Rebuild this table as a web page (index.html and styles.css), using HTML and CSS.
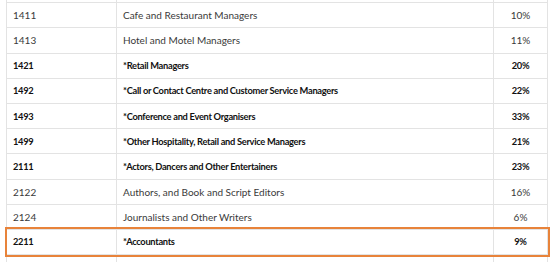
FILE: index.html
```html
<!DOCTYPE html>
<html>
<head>
<meta charset="utf-8">
<link rel="stylesheet" href="styles.css">
</head>
<body>
<table class="occ">
  <colgroup><col class="c-code"><col class="c-name"><col class="c-pct"></colgroup>
  <tbody>
    <tr class="cut"><td></td><td></td><td></td></tr>
    <tr><td>1411</td><td>Cafe and Restaurant Managers</td><td class="pct">10%</td></tr>
    <tr><td>1413</td><td>Hotel and Motel Managers</td><td class="pct">11%</td></tr>
    <tr class="b"><td>1421</td><td>*Retail Managers</td><td class="pct">20%</td></tr>
    <tr class="b"><td>1492</td><td>*Call or Contact Centre and Customer Service Managers</td><td class="pct">22%</td></tr>
    <tr class="b"><td>1493</td><td>*Conference and Event Organisers</td><td class="pct">33%</td></tr>
    <tr class="b"><td>1499</td><td>*Other Hospitality, Retail and Service Managers</td><td class="pct">21%</td></tr>
    <tr class="b"><td>2111</td><td>*Actors, Dancers and Other Entertainers</td><td class="pct">23%</td></tr>
    <tr><td>2122</td><td>Authors, and Book and Script Editors</td><td class="pct">16%</td></tr>
    <tr><td>2124</td><td>Journalists and Other Writers</td><td class="pct">6%</td></tr>
    <tr class="b hl"><td>2211</td><td>*Accountants</td><td class="pct">9%</td></tr>
    <tr><td></td><td></td><td></td></tr>
  </tbody>
</table>
</body>
</html>
```
FILE: styles.css
```css
html, body {
  margin: 0;
  padding: 0;
  background: #fff;
  overflow: hidden;
  height: 262px;
}
body {
  padding-left: 6px;
  font-family: "Lato", "Open Sans", sans-serif;
  font-size: 10px;
  color: #3a3a3a;
}
.occ {
  border-collapse: collapse;
  width: 541px;
  table-layout: fixed;
  margin-top: -23px;
}
.c-code { width: 110px; }
.c-name { width: 377px; }
.c-pct { width: 54px; }
.occ td {
  border: 1px solid #e3e3e3;
  height: 24.2px;
  padding: 0 0 0 6px;
  vertical-align: middle;
  white-space: nowrap;
}
.occ td.pct {
  text-align: center;
  padding: 0;
}
.occ tr.b td {
  font-weight: 700;
  font-size: 9.3px;
  letter-spacing: -0.3px;
  color: #111;
}
.occ tr.hl {
  outline: 2px solid #e8833a;
  outline-offset: 0;
}
```
